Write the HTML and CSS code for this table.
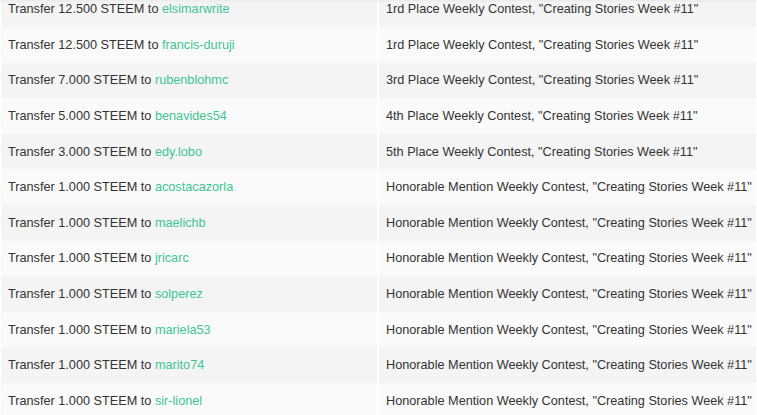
FILE: index.html
```html
<!DOCTYPE html>
<html>
<head>
<meta charset="utf-8">
<link rel="stylesheet" href="styles.css">
</head>
<body>
<div class="viewport">
  <div class="table">
    <div class="row odd"><div class="cell">Transfer 12.500 STEEM to&nbsp;<a class="user">elsimarwrite</a></div><div class="cell">1rd Place Weekly Contest, "Creating Stories Week #11"</div></div>
    <div class="row"><div class="cell">Transfer 12.500 STEEM to&nbsp;<a class="user">francis-duruji</a></div><div class="cell">1rd Place Weekly Contest, "Creating Stories Week #11"</div></div>
    <div class="row odd"><div class="cell">Transfer 7.000 STEEM to&nbsp;<a class="user">rubenblohmc</a></div><div class="cell">3rd Place Weekly Contest, "Creating Stories Week #11"</div></div>
    <div class="row"><div class="cell">Transfer 5.000 STEEM to&nbsp;<a class="user">benavides54</a></div><div class="cell">4th Place Weekly Contest, "Creating Stories Week #11"</div></div>
    <div class="row odd"><div class="cell">Transfer 3.000 STEEM to&nbsp;<a class="user">edy.lobo</a></div><div class="cell">5th Place Weekly Contest, "Creating Stories Week #11"</div></div>
    <div class="row"><div class="cell">Transfer 1.000 STEEM to&nbsp;<a class="user">acostacazorla</a></div><div class="cell">Honorable Mention Weekly Contest, "Creating Stories Week #11"</div></div>
    <div class="row odd"><div class="cell">Transfer 1.000 STEEM to&nbsp;<a class="user">maelichb</a></div><div class="cell">Honorable Mention Weekly Contest, "Creating Stories Week #11"</div></div>
    <div class="row"><div class="cell">Transfer 1.000 STEEM to&nbsp;<a class="user">jricarc</a></div><div class="cell">Honorable Mention Weekly Contest, "Creating Stories Week #11"</div></div>
    <div class="row odd"><div class="cell">Transfer 1.000 STEEM to&nbsp;<a class="user">solperez</a></div><div class="cell">Honorable Mention Weekly Contest, "Creating Stories Week #11"</div></div>
    <div class="row"><div class="cell">Transfer 1.000 STEEM to&nbsp;<a class="user">mariela53</a></div><div class="cell">Honorable Mention Weekly Contest, "Creating Stories Week #11"</div></div>
    <div class="row odd"><div class="cell">Transfer 1.000 STEEM to&nbsp;<a class="user">marito74</a></div><div class="cell">Honorable Mention Weekly Contest, "Creating Stories Week #11"</div></div>
    <div class="row"><div class="cell">Transfer 1.000 STEEM to&nbsp;<a class="user">sir-lionel</a></div><div class="cell">Honorable Mention Weekly Contest, "Creating Stories Week #11"</div></div>
  </div>
</div>
</body>
</html>
```
FILE: styles.css
```css
html, body {
  margin: 0;
  padding: 0;
  background: #ffffff;
}
body {
  font-family: "Liberation Sans", Arial, sans-serif;
  font-size: 12.7px;
  color: #333333;
}
.viewport {
  position: relative;
  height: 415px;
  overflow: hidden;
  padding-left: 1px;
  width: 755px;
}
.viewport::after {
  content: "";
  position: absolute;
  left: 0;
  right: 0;
  top: 0;
  height: 3px;
  background: linear-gradient(#ebebeb, rgba(240,240,240,0));
}
.table {
  margin-top: -8.6px;
  display: flex;
  flex-direction: column;
}
.row {
  display: grid;
  grid-template-columns: 376px 1fr;
  column-gap: 2px;
  height: 35.6px;
}
.cell {
  display: flex;
  align-items: center;
  padding: 0 7px;
  background: #fafafa;
  white-space: nowrap;
  overflow: hidden;
}
.row.odd .cell {
  background: #f4f4f4;
}
.user {
  color: #3ec594;
  text-decoration: none;
}
```
